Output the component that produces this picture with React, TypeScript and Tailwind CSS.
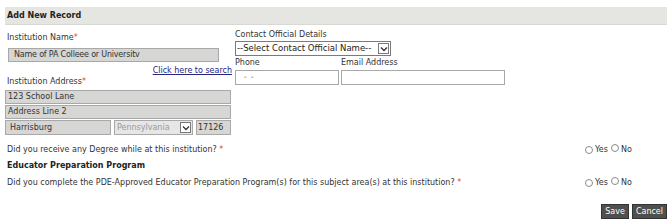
import React from 'react';

const Req = () => <span className="text-[#e0442f]">*</span>;

const Radio = () => (
  <span className="inline-block w-[8px] h-[8px] rounded-full border border-[#8a8a8a] bg-white" />
);

const YesNo = () => (
  <div className="flex items-center text-[8px] text-[#333]">
    <Radio />
    <span className="ml-[2px]">Yes</span>
    <span className="ml-[3px]">
      <Radio />
    </span>
    <span className="ml-[2px]">No</span>
  </div>
);

const Arrow = () => (
  <span className="flex items-center justify-center w-[11px] h-[11px] border border-[#7a7a7a] bg-white shrink-0">
    <svg width="8" height="6" viewBox="0 0 8 6">
      <path d="M1 1.5 L4 4.5 L7 1.5" fill="none" stroke="#333" strokeWidth="1.3" />
    </svg>
  </span>
);

export default function App() {
  return (
    <div className="w-[672px] h-[222px] bg-white text-[#333] font-['DejaVu_Sans',Verdana,sans-serif] text-[8px] overflow-hidden">
      <div className="pt-[7px] px-[5px]">
        <div className="h-[18px] bg-[#e5e5e1] border-b border-[#d8d8d4] flex items-center pl-[2px] font-bold text-[8px] text-[#222]">
          Add New Record
        </div>
      </div>

      <div className="flex pl-[7px]">
        {/* left column */}
        <div className="w-[226px] flex flex-col">
          <div className="mt-[7px] h-[12px] leading-[12px]">
            Institution Name<Req />
          </div>
          <div className="mt-[4px] ml-[1px] w-[211px] h-[14px] bg-[#d6d6d4] border border-[#a8a8a8] flex items-center pl-[5px] text-[#333] tracking-[-0.2px]">
            Name of PA Colleee or Universitv
          </div>
          <div className="flex justify-end mt-[3px] h-[12px] leading-[12px]">
            <span className="underline text-[#262683] mr-[1px]">Click here to search</span>
          </div>
          <div className="h-[10px] leading-[10px]">
            Institution Address<Req />
          </div>
          <div className="mt-[3px] flex flex-col gap-[1px] w-[226px] ml-[-2px]">
            <div className="h-[14px] bg-[#d6d6d4] border border-[#a8a8a8] flex items-center pl-[2px]">
              123 School Lane
            </div>
            <div className="h-[14px] bg-[#d6d6d4] border border-[#a8a8a8] flex items-center pl-[2px]">
              Address Line 2
            </div>
            <div className="flex gap-[3px] h-[15px]">
              <div className="w-[106px] bg-[#d6d6d4] border border-[#a8a8a8] flex items-center pl-[4px]">
                Harrisburg
              </div>
              <div className="w-[79px] bg-[#e6e6e6] border border-[#a8a8a8] flex items-center justify-between pl-[2px] pr-[1px] text-[#9a9a9a]">
                <span>Pennsylvania</span>
                <Arrow />
              </div>
              <div className="w-[35px] bg-[#d6d6d4] border border-[#a8a8a8] flex items-center pl-[1px]">
                17126
              </div>
            </div>
          </div>
        </div>

        {/* right column */}
        <div className="flex flex-col ml-[2px]">
          <div className="mt-[5px] h-[10px] leading-[10px]">Contact Official Details</div>
          <div className="mt-[1px] w-[156px] h-[15px] border border-[#7a7a7a] bg-white flex items-center justify-between pl-[1px] pr-[1px] text-[8.5px] text-[#222] whitespace-nowrap overflow-hidden">
            <span>--Select Contact Official Name--</span>
            <Arrow />
          </div>
          <div className="flex mt-[2px] h-[10px] leading-[10px]">
            <span className="w-[106px]">Phone</span>
            <span>Email Address</span>
          </div>
          <div className="flex gap-[2px] mt-[2px]">
            <div className="w-[104px] h-[15px] border border-[#a8a8a8] bg-white flex items-center pl-[8px] text-[7px]">
              -&nbsp;&nbsp;-
            </div>
            <div className="w-[164px] h-[15px] border border-[#a8a8a8] bg-white" />
          </div>
        </div>
      </div>

      <div className="pl-[7px] pr-[5px] mt-[9px]">
        <div className="grid grid-cols-[578px_auto] items-center h-[12px]">
          <span>
            Did you receive any Degree while at this institution? <Req />
          </span>
          <YesNo />
        </div>
        <div className="mt-[4px] h-[12px] leading-[12px] font-bold text-[#222]">Educator Preparation Program</div>
        <div className="grid grid-cols-[578px_auto] items-center h-[12px] mt-[5px]">
          <span>
            Did you complete the PDE-Approved Educator Preparation Program(s) for this subject area(s) at this institution? <Req />
          </span>
          <YesNo />
        </div>
        <div className="flex justify-end gap-[3px] mt-[15px]">
          <button className="h-[15px] px-[3px] bg-[#4f4f4f] text-white border border-[#333]">Save</button>
          <button className="h-[15px] px-[3px] bg-[#4f4f4f] text-white border border-[#333]">Cancel</button>
        </div>
      </div>
    </div>
  );
}
